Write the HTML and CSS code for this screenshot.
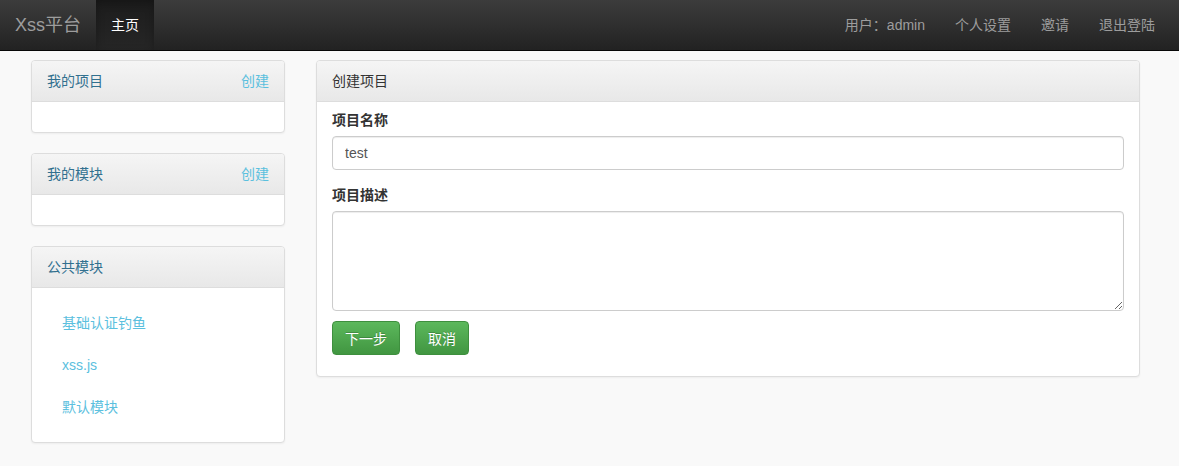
FILE: index.html
```html
<!DOCTYPE html>
<html lang="zh-CN">
<head>
  <meta charset="UTF-8">
  <title>Xss平台</title>
  <link rel="stylesheet" href="styles.css">
</head>
<body>
  <nav class="navbar">
    <div class="nav-left">
      <a class="brand" href="#">Xss平台</a>
      <a class="nav-link active" href="#">主页</a>
    </div>
    <div class="nav-right">
      <a class="nav-link" href="#">用户：admin</a>
      <a class="nav-link" href="#">个人设置</a>
      <a class="nav-link" href="#">邀请</a>
      <a class="nav-link" href="#">退出登陆</a>
    </div>
  </nav>

  <div class="main">
    <div class="sidebar">
      <div class="panel">
        <div class="panel-heading side-heading">
          <span>我的项目</span>
          <a class="create" href="#">创建</a>
        </div>
        <div class="panel-body"></div>
      </div>
      <div class="panel">
        <div class="panel-heading side-heading">
          <span>我的模块</span>
          <a class="create" href="#">创建</a>
        </div>
        <div class="panel-body"></div>
      </div>
      <div class="panel">
        <div class="panel-heading side-heading">
          <span>公共模块</span>
        </div>
        <div class="panel-body">
          <ul class="pills">
            <li><a href="#">基础认证钓鱼</a></li>
            <li><a href="#">xss.js</a></li>
            <li><a href="#">默认模块</a></li>
          </ul>
        </div>
      </div>
    </div>

    <div class="content">
      <div class="panel">
        <div class="panel-heading">创建项目</div>
        <form class="panel-body form-body">
          <div class="form-group">
            <label for="title">项目名称</label>
            <input type="text" id="title" class="form-control" value="test">
          </div>
          <div class="form-group last">
            <label for="desc">项目描述</label>
            <textarea id="desc" class="form-control" rows="5"></textarea>
          </div>
          <div class="actions">
            <button type="button" class="btn">下一步</button>
            <button type="button" class="btn">取消</button>
          </div>
        </form>
      </div>
    </div>
  </div>
</body>
</html>
```

FILE: styles.css
```css
body {
  margin: 0;
  font-family: "Liberation Sans", Arial, "Noto Sans CJK SC", sans-serif;
  font-size: 14px;
  line-height: 20px;
  color: #333;
  background: #f9f9f9;
}
a {
  text-decoration: none;
}
.navbar {
  display: flex;
  justify-content: space-between;
  height: 50px;
  background: linear-gradient(to bottom, #3c3c3c, #222);
  border-bottom: 1px solid #080808;
}
.nav-left,
.nav-right {
  display: flex;
}
.nav-right {
  padding-right: 9px;
}
.brand {
  padding: 15px;
  font-size: 18px;
  line-height: 20px;
  color: #9d9d9d;
}
.nav-link {
  padding: 15px;
  color: #9d9d9d;
  line-height: 20px;
}
.nav-link.active {
  color: #fff;
  background: linear-gradient(to bottom, #1c1c1c, #262626);
  box-shadow: inset 0 3px 9px rgba(0, 0, 0, 0.25);
}
.main {
  display: flex;
  gap: 31px;
  padding: 9px 39px 0 31px;
}
.sidebar {
  width: 254px;
  flex-shrink: 0;
}
.content {
  flex: 1;
}
.panel {
  background: #fff;
  border: 1px solid #ddd;
  border-radius: 4px;
  box-shadow: 0 1px 2px rgba(0, 0, 0, 0.05);
  margin-bottom: 20px;
}
.panel-heading {
  padding: 10px 15px;
  background: linear-gradient(to bottom, #f5f5f5, #e8e8e8);
  border-bottom: 1px solid #ddd;
  border-radius: 3px 3px 0 0;
}
.side-heading {
  display: flex;
  justify-content: space-between;
  color: #31708f;
}
.create {
  color: #5bc0de;
}
.panel-body {
  min-height: 30px;
  box-sizing: border-box;
  padding: 0 15px;
}
.pills {
  list-style: none;
  margin: 0;
  padding: 15px 0;
}
.pills li + li {
  margin-top: 2px;
}
.pills a {
  display: block;
  padding: 10px 15px;
  color: #5bc0de;
}
.form-body {
  padding: 8px 15px 21px;
}
.form-group {
  margin-bottom: 15px;
}
.form-group.last {
  margin-bottom: 10px;
}
.form-group label {
  display: block;
  font-weight: bold;
  margin-bottom: 6px;
}
.form-control {
  display: block;
  width: 100%;
  box-sizing: border-box;
  padding: 6px 12px;
  font-family: inherit;
  font-size: 14px;
  line-height: 20px;
  color: #555;
  border: 1px solid #ccc;
  border-radius: 4px;
  box-shadow: inset 0 1px 1px rgba(0, 0, 0, 0.075);
}
input.form-control {
  height: 34px;
}
textarea.form-control {
  height: 100px;
}
.actions {
  display: flex;
  gap: 15px;
}
.btn {
  height: 34px;
  padding: 6px 12px;
  font-family: inherit;
  font-size: 14px;
  color: #fff;
  background: linear-gradient(to bottom, #5cb85c, #419641);
  border: 1px solid #3e8f3e;
  border-radius: 4px;
  text-shadow: 0 -1px 0 rgba(0, 0, 0, 0.2);
  cursor: pointer;
}
```
